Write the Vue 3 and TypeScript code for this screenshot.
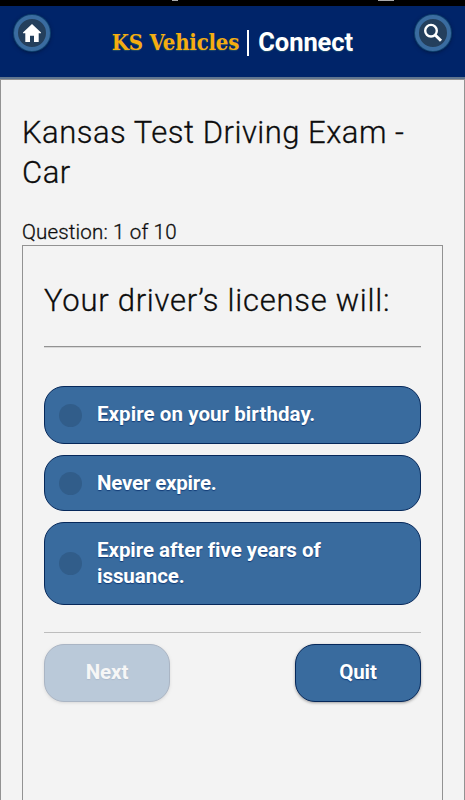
<script setup lang="ts">
import { ref } from 'vue'

const answers: string[] = [
  'Expire on your birthday.',
  'Never expire.',
  'Expire after five years of issuance.',
]
const selected = ref<number | null>(null)
</script>

<template>
  <div class="screen">
    <div class="status"><i class="mark mark-a"></i><i class="mark mark-b"></i></div>
    <header class="bar">
      <button class="round" aria-label="Home">
        <svg width="20" height="20" viewBox="0 0 20 20">
          <path d="M10 1 L19 9.5 V10.3 H16.7 V19 H12 V12.8 H8 V19 H3.3 V10.3 H1 V9.5 Z" fill="#fff" />
        </svg>
      </button>
      <h1 class="brand"><span class="ks">KS Vehicles</span><span class="sep"></span><span class="connect">Connect</span></h1>
      <button class="round" aria-label="Search">
        <svg width="20" height="20" viewBox="0 0 20 20" fill="none" stroke="#fff">
          <circle cx="8" cy="7.7" r="5.8" stroke-width="2.4" />
          <path d="M12.2 12 L18 17.8" stroke-width="3" />
        </svg>
      </button>
    </header>
    <main class="page">
      <h2 class="title">Kansas Test Driving Exam - Car</h2>
      <p class="count">Question: 1 of 10</p>
      <section class="panel">
        <h3 class="question">Your driver’s license will:</h3>
        <div class="rule"></div>
        <div class="answers">
          <button
            v-for="(a, i) in answers"
            :key="a"
            class="answer"
            :class="{ chosen: selected === i }"
            @click="selected = i"
          >
            <span class="dot"></span><span class="label">{{ a }}</span>
          </button>
        </div>
        <div class="actions">
          <button class="action" :class="{ off: selected === null }">Next</button>
          <button class="action">Quit</button>
        </div>
      </section>
    </main>
  </div>
</template>

<style>
body { background: #f3f3f3; overflow: hidden; }
</style>

<style scoped>
* { box-sizing: border-box; }
.screen { height: 800px; display: flex; flex-direction: column; font-family: Roboto, sans-serif; font-variant-ligatures: none; color: #0c0c0c; overflow: hidden; }
h1, h2, h3, p { margin: 0; font-weight: 400; }
button { font-family: inherit; padding: 0; cursor: pointer; }
.status { flex: none; height: 6px; background: #000; position: relative; }
.mark { position: absolute; top: 0; height: 1px; background: #aaa; }
.mark-a { left: 172px; width: 6px; }
.mark-b { left: 378px; width: 16px; }
.bar { flex: none; height: 73px; background: #002469; border-bottom: 2px solid #60758f; display: flex; justify-content: space-between; padding: 9px 14px 0; }
.round { width: 36px; height: 36px; border-radius: 50%; border: 4px solid #3a6ca0; background: #243f5c; box-shadow: 0 0 0 1px #0f426f, 0 1px 4px #001437; display: flex; align-items: center; justify-content: center; }
.round svg { flex: none; }
.brand { display: flex; align-items: center; height: 54px; font-weight: 700; white-space: nowrap; text-shadow: 0 1px 1px #1e4b68; }
.ks { font: 700 22px/30px "DejaVu Serif Condensed", "DejaVu Serif", serif; font-stretch: condensed; letter-spacing: -.2px; color: #f5ad10; }
.sep { width: 2px; height: 26px; background: #fff; margin: 1px 9px 0 8px; }
.connect { font-size: 25.5px; line-height: 30px; color: #fff; letter-spacing: -.05px; }
.page { flex: 1; border: 1px solid #929292; border-bottom: 0; background: #f3f3f3; padding: 33px 21px 0; display: flex; flex-direction: column; }
.title, .count, .question { font-weight: 300; -webkit-text-stroke: .3px #0c0c0c; }
.title { font-size: 31px; line-height: 40px; letter-spacing: .51px; }
.count { font-size: 20.5px; line-height: 26px; margin-top: 26px; letter-spacing: .17px; }
.panel { flex: 1; border: 1px solid #929292; border-bottom: 0; padding: 34px 21px 0; }
.question { font-size: 31px; line-height: 42px; white-space: nowrap; letter-spacing: .74px; }
.rule { height: 2px; margin-top: 24px; border-top: 1px solid #929292; border-bottom: 1px solid #d8d8d8; }
.answers { margin-top: 38px; padding-bottom: 27px; border-bottom: 1px solid #bdbdbd; display: flex; flex-direction: column; gap: 11px; }
.answer { min-height: 58px; border: 1px solid #06285a; border-radius: 20px; background: #396b9e; color: #fff; display: flex; align-items: center; text-align: left; padding: 14px 60px 14px 14px; gap: 15px; font-weight: 700; font-size: 20.5px; line-height: 26px; text-shadow: 0 1px 1px #123c78; letter-spacing: .06px; }
.answer:nth-child(2) { min-height: 56px; letter-spacing: -.2px; }
.answer:nth-child(3) { min-height: 83px; letter-spacing: -.04px; }
.label { position: relative; top: -1px; }
.answer:nth-child(2) .label { top: 0; }
.dot { flex: none; width: 23px; height: 23px; border-radius: 50%; background: #315d8a; }
.chosen .dot { background: #fff; }
.actions { display: flex; justify-content: space-between; padding-top: 11px; }
.action { width: 126px; height: 58px; padding-bottom: 3px; border: 1px solid #06285a; border-radius: 20px; background: #396b9e; color: #fff; font-weight: 700; font-size: 20.5px; letter-spacing: -.1px; box-shadow: 0 1px 3px rgba(0, 0, 0, .35); text-shadow: 0 1px 1px #123c78; }
.off { opacity: .3; }
</style>
